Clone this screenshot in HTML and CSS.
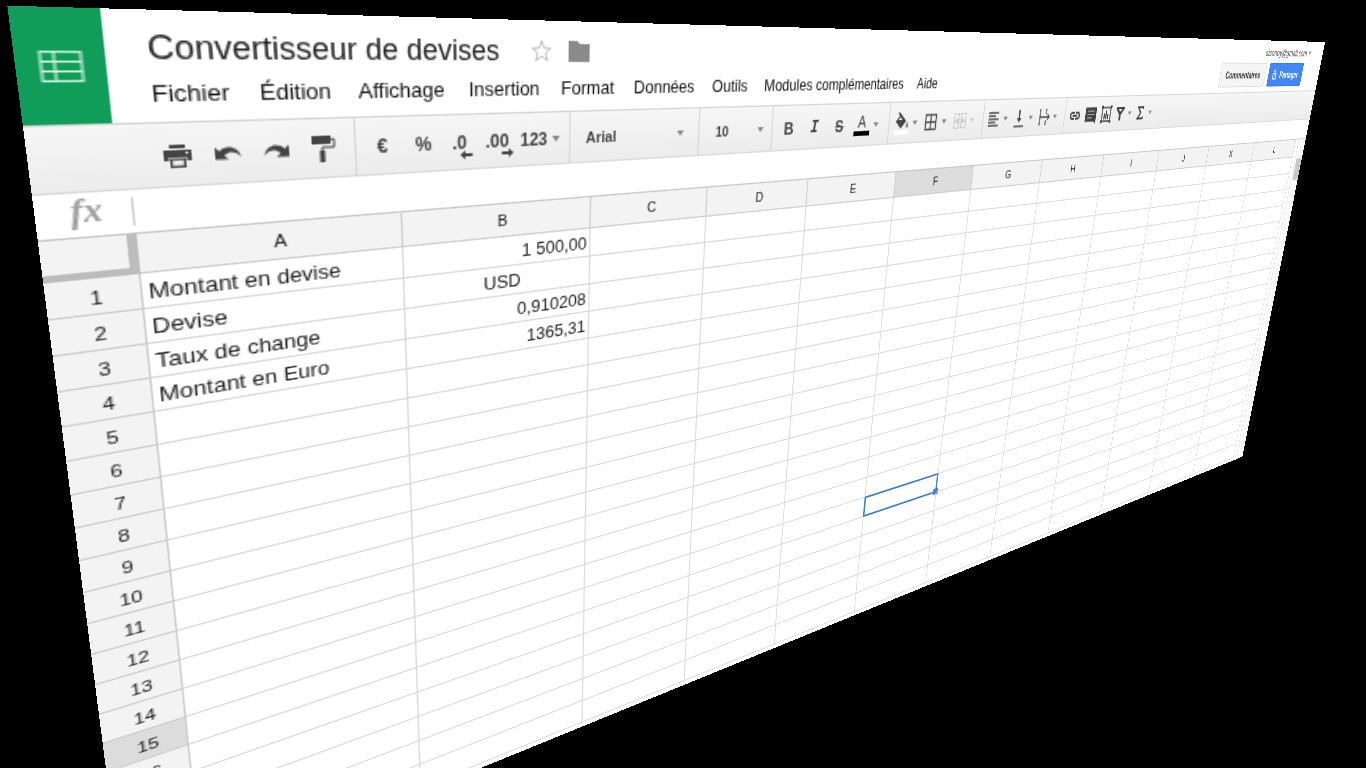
FILE: index.html
```html
<!DOCTYPE html>
<html lang="fr">
<head>
  <meta charset="UTF-8">
  <meta name="viewport" content="width=device-width, initial-scale=1.0">
  <title>Convertisseur de devises</title>
  <link rel="stylesheet" href="styles.css">
</head>
<body>
  <div class="app">
    <header class="header">
      <a class="logo" href="#" aria-label="Accueil Sheets">
        <svg width="20" height="16" viewBox="0 0 20 16" fill="none" stroke="#d9f7e6" stroke-width="1">
          <rect x="1" y="0.5" width="18" height="15"></rect>
          <path d="M1 5.500h18M1 10.500h18M7 0.500v15"></path>
        </svg>
      </a>
      <div class="heading">
        <div class="title-row">
          <h1 class="title">Convertisseur de devises</h1>
          <button class="title-btn" aria-label="Suivi">
            <svg width="16" height="16" viewBox="0 0 16 16" fill="none" stroke="#b8b8b8" stroke-width="1">
              <path d="M8 1.300l1.800 4.600 4.900.3-3.800 3.100 1.300 4.800L8 11.400l-4.200 2.700 1.300-4.800L1.300 6.200l4.900-.3z"></path>
            </svg>
          </button>
          <button class="title-btn" aria-label="Dossier">
            <svg width="16" height="16" viewBox="0 0 16 16" fill="#8a8a8a">
              <path d="M0 1h6.500l2 2H16v12H0z"></path>
            </svg>
          </button>
        </div>
        <nav class="menu">
          <button>Fichier</button>
          <button>Édition</button>
          <button>Affichage</button>
          <button>Insertion</button>
          <button>Format</button>
          <button>Données</button>
          <button>Outils</button>
          <button>Modules complémentaires</button>
          <button>Aide</button>
        </nav>
      </div>
      <div class="account">
        <button class="email">sisonoy@gmail.com <span class="arrow"></span></button>
        <div class="actions">
          <button class="btn">Commentaires</button>
          <button class="btn btn-share">
            <svg width="9" height="12" viewBox="0 0 9 12" fill="none" stroke="#fff" stroke-width="1.300">
              <path d="M2.500 5V3a2 2 0 0 1 4 0v2"></path>
              <rect x="1" y="5" width="7" height="6"></rect>
              <path d="M4.500 7v2"></path>
            </svg>
            Partager
          </button>
        </div>
      </div>
    </header>

    <div class="toolbar">
      <button class="tool" aria-label="Imprimer">
        <svg width="16" height="16" viewBox="0 0 16 16" fill="#444">
          <path d="M4 2h8v2H4zM1 5h14v6h-2.500V9h-9v2H1zM4 9.500h8V15H4zm1.200 1.200v3.100h5.600v-3.100z" fill-rule="evenodd"></path>
          <rect x="12" y="6" width="1.400" height="1.200" fill="#f2f2f2"></rect>
        </svg>
      </button>
      <button class="tool" aria-label="Annuler">
        <svg width="16" height="16" viewBox="0 0 16 16" fill="#444">
          <path d="M1 4.500v7h7L5.800 9.200C8.500 6.800 12.500 7 14.700 10.600C13.800 4.300 7 2.600 3.300 6.800z"></path>
        </svg>
      </button>
      <button class="tool" aria-label="Rétablir">
        <svg width="16" height="16" viewBox="0 0 16 16" fill="#444">
          <path d="M15 4.500v7H8l2.200-2.300C7.500 6.800 3.500 7 1.300 10.600C2.200 4.300 9 2.600 12.700 6.800z"></path>
        </svg>
      </button>
      <button class="tool" aria-label="Copier la mise en forme">
        <svg width="16" height="18" viewBox="0 0 16 18" fill="#444">
          <path d="M2 1h11v5H2zM6.500 10h3v7h-3z"></path>
          <path d="M13 3.200h2V8H8v2.500" fill="none" stroke="#444" stroke-width="1"></path>
        </svg>
      </button>
      <span class="sep"></span>
      <button class="tool">€</button>
      <button class="tool">%</button>
      <button class="tool decimals" aria-label="Réduire les décimales">.0
        <svg width="9" height="6" viewBox="0 0 7 5" fill="#444"><path d="M0 2.500L3 0v1.600h4v1.800H3V5z"></path></svg>
      </button>
      <button class="tool decimals" aria-label="Ajouter des décimales">.00
        <svg width="9" height="6" viewBox="0 0 7 5" fill="#444"><path d="M7 2.500L4 0v1.600H0v1.800h4V5z"></path></svg>
      </button>
      <button class="tool tool-format">123<span class="arrow"></span></button>
      <span class="sep"></span>
      <div class="picker picker-font">
        <select aria-label="Police"><option>Arial</option></select>
        <span class="arrow"></span>
      </div>
      <span class="sep"></span>
      <div class="picker picker-size">
        <select aria-label="Taille de la police"><option>10</option></select>
        <span class="arrow"></span>
      </div>
      <span class="sep"></span>
      <button class="tool style bold">B</button>
      <button class="tool style italic">I</button>
      <button class="tool style strike">S</button>
      <button class="tool drop" aria-label="Couleur du texte">
        <span class="text-color">A</span><span class="arrow"></span>
      </button>
      <span class="sep"></span>
      <button class="tool drop" aria-label="Couleur de remplissage">
        <svg width="18" height="20" viewBox="0 0 18 20" fill="#444">
          <path d="M4 1l1.500-1 8.500 8L8 14.500 1.500 8.200 6 3.500z"></path>
          <path d="M7 4.500L4.500 7h5z" fill="#f2f2f2"></path>
          <path d="M15.500 8.500c3 4 1.500 5.500 0 5.500s-3-1.500 0-5.500z" fill="#888"></path>
          <path d="M0 16h17v4H0z" fill="#fff"></path>
        </svg>
        <span class="arrow"></span>
      </button>
      <button class="tool drop" aria-label="Bordures">
        <svg width="16" height="16" viewBox="0 0 16 16" fill="none" stroke="#444" stroke-width="1.400">
          <path d="M1.500 1.500h13v13h-13zM8 1.500v13M1.500 8h13"></path>
        </svg>
        <span class="arrow"></span>
      </button>
      <button class="tool drop faded" aria-label="Fusionner les cellules">
        <svg width="18" height="16" viewBox="0 0 18 16" fill="none" stroke="#666" stroke-width="1.200">
          <path d="M7.500 1.500h-6v13h6zM10.500 1.500h6v13h-6z" stroke-dasharray="3 1"></path>
          <path d="M1 8h6M11 8h6M5 6l2 2-2 2M13 6l-2 2 2 2"></path>
        </svg>
        <span class="arrow"></span>
      </button>
      <span class="sep"></span>
      <button class="tool drop" aria-label="Alignement horizontal">
        <svg width="16" height="16" viewBox="0 0 16 16" stroke="#444" stroke-width="1.500">
          <path d="M1 2h14M1 5h10M1 8h14M1 11h10M1 14h14"></path>
        </svg>
        <span class="arrow"></span>
      </button>
      <button class="tool drop" aria-label="Alignement vertical">
        <svg width="16" height="18" viewBox="0 0 16 18" fill="#444">
          <path d="M7 1h2v8h2.500L8 13 4.500 9H7zM1 16h14v1.500H1z"></path>
        </svg>
        <span class="arrow"></span>
      </button>
      <button class="tool drop" aria-label="Retour à la ligne">
        <svg width="18" height="18" viewBox="0 0 18 18" fill="none" stroke="#444" stroke-width="1.400">
          <path d="M2 1v16M11 1v5M11 12v5M2 9h14M13 6l3 3-3 3"></path>
        </svg>
        <span class="arrow"></span>
      </button>
      <span class="sep"></span>
      <button class="tool" aria-label="Insérer un lien">
        <svg width="18" height="16" viewBox="0 0 18 16" fill="none" stroke="#444" stroke-width="2">
          <path d="M8 11H5a3 3 0 0 1 0-6h3M10 5h3a3 3 0 0 1 0 6h-3M5.500 8h7"></path>
        </svg>
      </button>
      <button class="tool" aria-label="Insérer un commentaire">
        <svg width="18" height="18" viewBox="0 0 16 16" fill="#444">
          <path d="M0 1h16v15l-3-2H0z"></path>
          <path d="M3 4.500h10M3 7.500h10M3 10.500h7" stroke="#aaa" stroke-width="1"></path>
        </svg>
      </button>
      <button class="tool" aria-label="Insérer un graphique">
        <svg width="18" height="18" viewBox="0 0 18 18" fill="none" stroke="#444" stroke-width="1.500">
          <path d="M2 2h14v14H2z"></path>
          <path d="M6 14V8M9 14V5M12 14V9" stroke-width="2"></path>
          <path d="M0 0h3v3H0zM15 0h3v3h-3zM0 15h3v3H0zM15 15h3v3h-3z" fill="#444" stroke="none"></path>
        </svg>
      </button>
      <button class="tool drop" aria-label="Filtrer">
        <svg width="16" height="16" viewBox="0 0 16 16" fill="#444">
          <path d="M1 1h14v2L9.500 9v6h-3V9L1 3zM5 3l2 2.500h2L11 3z" fill-rule="evenodd"></path>
        </svg>
        <span class="arrow"></span>
      </button>
      <button class="tool drop" aria-label="Fonctions">
        <svg width="14" height="16" viewBox="0 0 14 16" fill="none" stroke="#444" stroke-width="2">
          <path d="M12 4V2H3l5 6-5 6h9v-2"></path>
        </svg>
        <span class="arrow"></span>
      </button>
    </div>

    <div class="formula">
      <label class="fx" for="formula-input">fx</label>
      <input class="formula-input" id="formula-input" type="text">
    </div>

    <div class="grid">
      <table class="cells">
        <colgroup>
          <col class="col-index">
          <col class="col-a">
          <col class="col-b">
          <col span="10">
        </colgroup>
        <thead>
          <tr>
            <th class="corner"></th>
            <th>A</th><th>B</th><th>C</th><th>D</th><th>E</th><th class="active">F</th>
            <th>G</th><th>H</th><th>I</th><th>J</th><th>K</th><th>L</th>
          </tr>
        </thead>
        <tbody id="rows"></tbody>
      </table>
      <div class="gutter"></div>
      <div class="scrollbar"><div class="thumb"></div></div>
    </div>
  </div>

  <script src="sheet.js"></script>
</body>
</html>
```

FILE: styles.css
```css
* {
  box-sizing: border-box;
}

body {
  margin: 0;
  min-height: 100vh;
  background: #000;
  overflow: hidden;
  font-family: Arial, "Liberation Sans", sans-serif;
}

button,
select,
input {
  font-family: inherit;
  border: 0;
  margin: 0;
  padding: 0;
  background: none;
  color: inherit;
}

svg {
  display: block;
  flex: none;
}

/* the whole window is a plane seen in perspective */
.app {
  width: 100vw;
  background: #fff;
  color: #222;
  padding-bottom: 4px;
  transform-origin: 0 0;
  transform: matrix3d(
    2.429, 0.073, 0, 0.001105,
    0.27, 2.0624, 0, 0.000511,
    0, 0, 1, 0,
    7.3, 5.7, 0, 1
  );
}

/* Header */
.header {
  display: flex;
  height: 60px;
}

.logo {
  width: 40px;
  background: #109d59;
  display: flex;
  align-items: center;
  justify-content: center;
}

.heading {
  flex: 1;
  padding: 8px 0 0 20px;
}

.title-row {
  display: flex;
  align-items: center;
  height: 24px;
}

.title {
  margin: 0 14px 0 0;
  font-size: 18px;
  font-weight: normal;
  line-height: 24px;
}

.title-btn {
  margin-left: 8px;
  margin-right: 4px;
}

.menu {
  display: flex;
  gap: 16px;
  padding-top: 4px;
}

.menu button {
  font-size: 13px;
  line-height: 18px;
  color: #111;
}

.account {
  display: flex;
  flex-direction: column;
  align-items: flex-end;
  padding: 7px 43px 0 0;
}

.email {
  display: flex;
  align-items: center;
  gap: 4px;
  margin-right: -13px;
  font-size: 11px;
  line-height: 14px;
  color: #444;
}

.actions {
  display: flex;
  gap: 7px;
  padding-top: 5px;
}

.btn {
  height: 28px;
  padding: 0 11px;
  border: 1px solid #dcdcdc;
  border-radius: 2px;
  background: #f5f5f5;
  font-size: 11px;
  font-weight: bold;
  color: #333;
}

.btn-share {
  display: flex;
  align-items: center;
  gap: 7px;
  padding: 0 9px;
  border-color: #3079ed;
  background: #4387f5;
  color: #fff;
}

/* Toolbar */
.toolbar {
  display: flex;
  align-items: center;
  height: 37px;
  padding-left: 57px;
  border-top: 1px solid #d4d4d4;
  border-bottom: 1px solid #d9d9d9;
  background: linear-gradient(#f6f6f6, #ececec);
  color: #444;
  font-size: 11px;
  font-weight: bold;
}

.sep {
  align-self: stretch;
  width: 1px;
  margin: 0 3px 0 6px;
  background: #d6d6d6;
}

.arrow {
  flex: none;
  border: 3px solid transparent;
  border-top: 4px solid #888;
  border-bottom: 0;
}

.tool {
  display: flex;
  align-items: center;
  justify-content: center;
  width: 26px;
  height: 26px;
  font-size: 12px;
  font-weight: bold;
}

.decimals svg {
  align-self: flex-end;
  margin: 0 0 2px -5px;
}

.tool-format {
  width: 32px;
  gap: 3px;
}

.picker {
  position: relative;
  display: flex;
  align-items: center;
}

.picker select {
  appearance: none;
  width: 100%;
  font-size: 11px;
  font-weight: bold;
}

/* caret lies over the select */
.picker .arrow {
  position: absolute;
  right: 7px;
  pointer-events: none;
}

.picker-font {
  width: 98px;
}

.picker-font select {
  padding-left: 9px;
}

.picker-size {
  width: 60px;
}

.picker-size select {
  padding-left: 12px;
}

.picker-size .arrow {
  right: 2px;
}

.style {
  width: 27px;
  font-size: 14px;
}

.italic {
  font-family: "Liberation Mono", monospace;
  font-style: italic;
}

.strike {
  text-decoration: line-through;
}

.drop {
  width: 37px;
  justify-content: space-between;
  padding: 0 6px 0 3px;
}

.text-color {
  width: 18px;
  border-bottom: 4px solid #000;
  font-size: 14px;
  font-weight: normal;
  line-height: 15px;
}

.faded {
  opacity: 0.35;
}

/* Formula bar */
.formula {
  display: flex;
  align-items: center;
  height: 24px;
}

.fx {
  width: 45px;
  padding: 0 0 4px 2px;
  text-align: center;
  font-family: "Liberation Serif", serif;
  font-size: 18px;
  font-style: italic;
  font-weight: bold;
  line-height: 18px;
  color: #a0a0a0;
}

.formula-input {
  flex: 1;
  height: 16px;
  border-left: 1px solid #ccc;
  outline: 0;
}

/* Grid */
.grid {
  display: flex;
}

.cells {
  flex: none;
  width: 1341px;
  table-layout: fixed;
  border-collapse: separate;
  border-spacing: 0;
}

.col-index {
  width: 46px;
}

.col-a {
  width: 149px;
}

.col-b {
  width: 136px;
}

.cells th {
  height: 24px;
  padding: 0 0 0 2px;
  border-top: 1px solid #c6c6c6;
  border-right: 1px solid #ccc;
  border-bottom: 1px solid #ccc;
  background: #f3f3f3;
  font-size: 11px;
  font-weight: normal;
}

.cells tbody th {
  height: 21px;
  padding-top: 1px;
  border-top: 0;
}

.cells .corner {
  border-right: 5px solid #bcbcbc;
  border-bottom: 4px solid #bcbcbc;
}

.cells .active {
  background: #dcdcdc;
}

.cells td {
  position: relative;
  height: 21px;
  padding: 2px 2px 0 3px;
  border-right: 1px solid #d8d8d8;
  border-bottom: 1px solid #d8d8d8;
  font-size: 13px;
  line-height: 18px;
  white-space: nowrap;
}

.cells .right {
  text-align: right;
}

.cells .center {
  text-align: center;
}

/* selection frame lies over the cell borders */
.selection {
  position: absolute;
  inset: -1px;
  border: 2px solid #4080d0;
}

.handle {
  position: absolute;
  right: -4px;
  bottom: -4px;
  width: 7px;
  height: 7px;
  background: #4285e0;
}

.gutter {
  width: 8px;
  border-top: 1px solid #c6c6c6;
  border-right: 1px solid #ddd;
}

.scrollbar {
  flex: 1;
  padding-top: 25px;
  background: #fafafa;
  border-top: 1px solid #c6c6c6;
}

.thumb {
  height: 28px;
  margin-left: 3px;
  background: #c8c8c8;
}
```

FILE: sheet.js
```js
const ROWS = 20;
const COLS = 12;

const values = {
  '1-1': ['Montant en devise'],
  '1-2': ['1 500,00', 'right'],
  '2-1': ['Devise'],
  '2-2': ['USD', 'center'],
  '3-1': ['Taux de change'],
  '3-2': ['0,910208', 'right'],
  '4-1': ['Montant en Euro'],
  '4-2': ['1365,31', 'right']
};
const selected = { row: 15, col: 6 };

const body = document.getElementById('rows');

for (let r = 1; r <= ROWS; r++) {
  const tr = document.createElement('tr');
  const th = document.createElement('th');
  // the headers of the last rows fall outside the window
  if (r <= 16) th.textContent = r;
  if (r === selected.row) th.className = 'active';
  tr.appendChild(th);

  for (let c = 1; c <= COLS; c++) {
    const td = document.createElement('td');
    const cell = values[r + '-' + c];
    if (cell) {
      td.textContent = cell[0];
      if (cell[1]) td.className = cell[1];
    }
    if (r === selected.row && c === selected.col) {
      td.innerHTML = '<div class="selection"><span class="handle"></span></div>';
    }
    tr.appendChild(td);
  }
  body.appendChild(tr);
}
```
